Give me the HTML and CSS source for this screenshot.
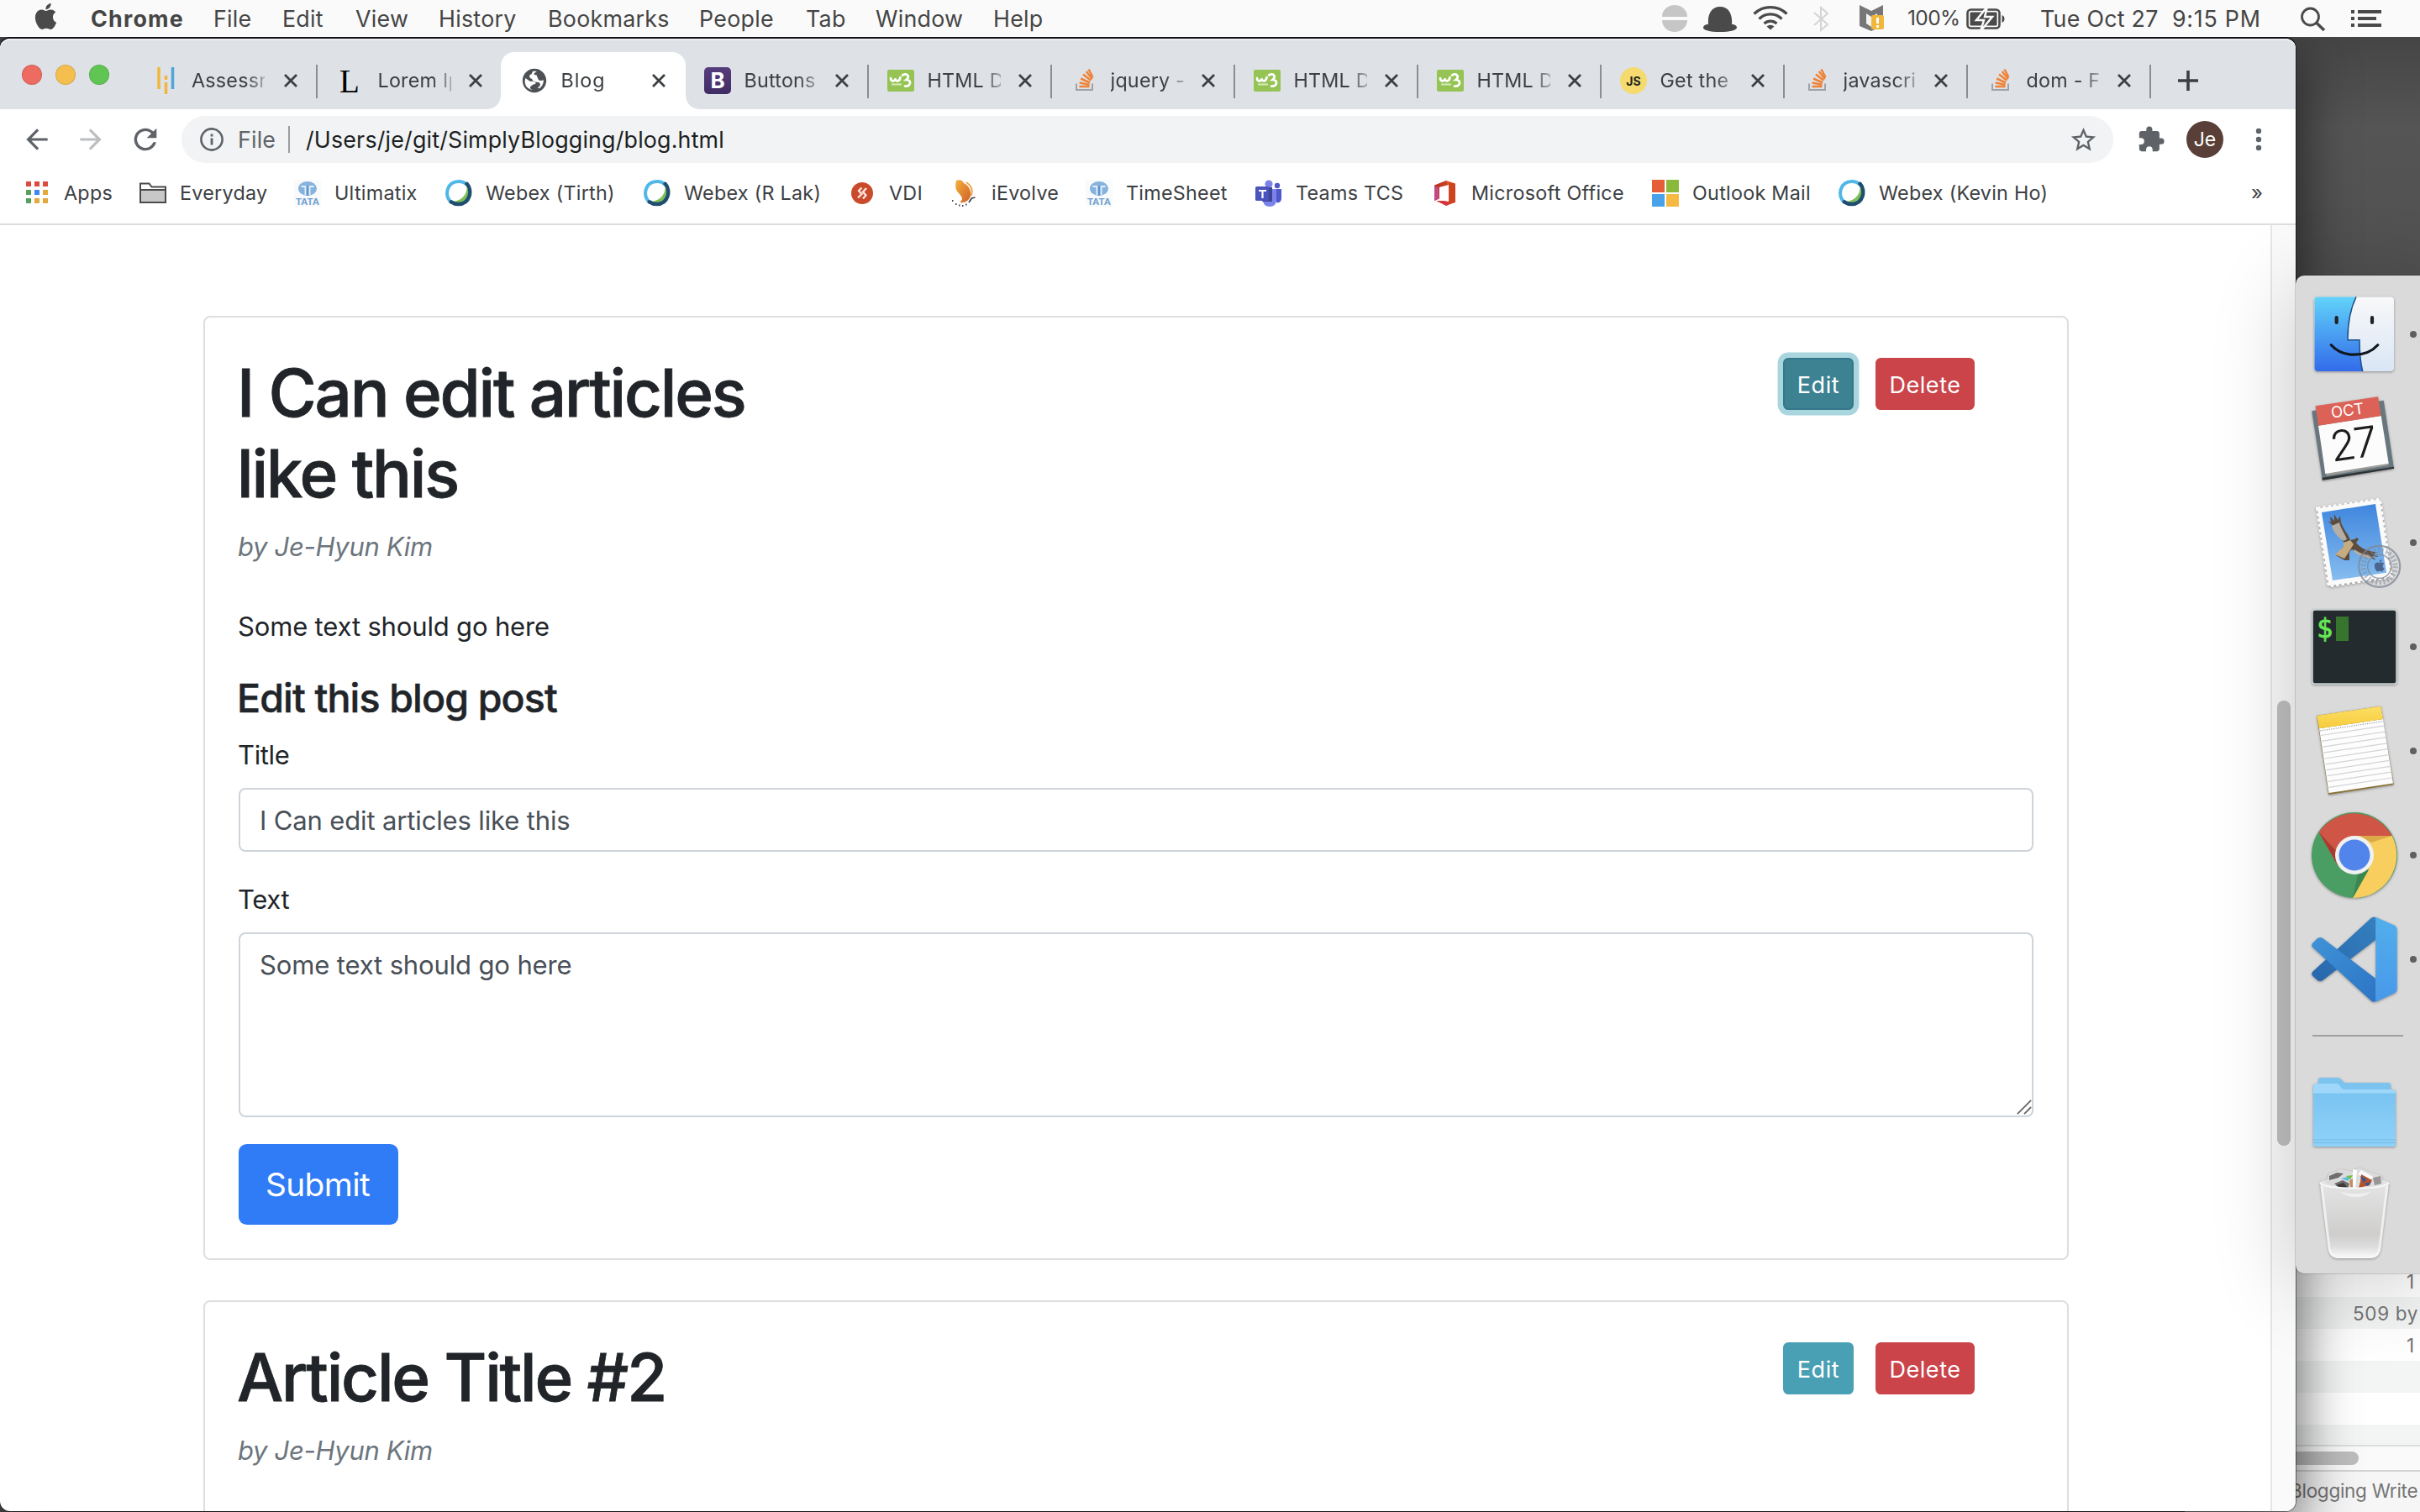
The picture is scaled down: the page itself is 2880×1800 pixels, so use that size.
FILE: index.html
```html
<!DOCTYPE html>
<html lang="en">
<head>
<meta charset="utf-8">
<title>Blog</title>
<link rel="stylesheet" href="styles.css">
</head>
<body>
<svg class="defs" aria-hidden="true">
  <defs>
    <linearGradient id="purple" x1="0" y1="0" x2="0" y2="1"><stop offset="0" stop-color="#563d7c"/><stop offset="1" stop-color="#402c64"/></linearGradient>
    <linearGradient id="gold" x1="0" y1="0" x2="1" y2="1"><stop offset="0" stop-color="#f4b13c"/><stop offset="1" stop-color="#cf5f28"/></linearGradient>
    <linearGradient id="officeRed" x1="0" y1="0" x2="1" y2="1"><stop offset="0" stop-color="#b02a1c"/><stop offset="1" stop-color="#e0562b"/></linearGradient>
    <linearGradient id="finderBlue" x1="0" y1="0" x2="0" y2="1"><stop offset="0" stop-color="#62d3fa"/><stop offset="1" stop-color="#326bea"/></linearGradient>
    <linearGradient id="finderWhite" x1="0" y1="0" x2="0" y2="1"><stop offset="0" stop-color="#f8f8f9"/><stop offset="1" stop-color="#d9e6f5"/></linearGradient>
    <linearGradient id="sky" x1="0" y1="0" x2="0" y2="1"><stop offset="0" stop-color="#3f86dd"/><stop offset="1" stop-color="#86bdf0"/></linearGradient>
    <linearGradient id="noteTop" x1="0" y1="0" x2="0" y2="1"><stop offset="0" stop-color="#fddf63"/><stop offset="1" stop-color="#f6cb3c"/></linearGradient>
    <linearGradient id="codeSide" x1="0" y1="0" x2="0" y2="1"><stop offset="0" stop-color="#52aeec"/><stop offset="1" stop-color="#4899ea"/></linearGradient>
    <linearGradient id="codeDark" x1="1" y1="0" x2="0" y2="1"><stop offset="0" stop-color="#3480bf"/><stop offset="1" stop-color="#2866ab"/></linearGradient>
    <linearGradient id="codeMid" x1="0" y1="0" x2="1" y2="1"><stop offset="0" stop-color="#3f93d6"/><stop offset="1" stop-color="#2d74c6"/></linearGradient>
    <linearGradient id="folderFront" x1="0" y1="0" x2="0" y2="1"><stop offset="0" stop-color="#7ac4f2"/><stop offset="1" stop-color="#8fd2f9"/></linearGradient>
    <linearGradient id="bin" x1="0" y1="0" x2="0" y2="1"><stop offset="0" stop-color="#e6e6e6"/><stop offset=".7" stop-color="#cfcecd"/><stop offset=".85" stop-color="#dcdcdc"/><stop offset="1" stop-color="#fafafb"/></linearGradient>
    <symbol id="close" viewBox="0 0 18 18"><path d="M2 2l14 14M16 2L2 16" fill="none" stroke="#3c4043" stroke-width="2.8"/></symbol>
    <symbol id="w3" viewBox="0 0 32 32"><rect y="3" width="32" height="26" rx="2" fill="#96c454"/><path d="M4 13c0 4 4.500 5 5.500.5C10 18 15 17 15.500 12M18 9.500c6-3 9 2 4.500 5.500 7 0 5.500 8-1.500 7.500" fill="none" stroke="#fff" stroke-width="2.700" stroke-linecap="round"/><path d="M5 20.500h12" stroke="#d8ebbd" stroke-width="2"/></symbol>
    <symbol id="so" viewBox="0 0 32 32"><path d="M7 19.500v7.500h19v-7.500" fill="none" stroke="#9fa3a7" stroke-width="2"/><g stroke="#ef8236" stroke-width="2.500"><path d="M10.500 23h12M10.700 18.500l11.800 2.400M12.200 13.500l10.800 5M15 8.500l9.300 7.300M18.700 5l7.200 9"/><path d="M21.500 2.500l5 9.500"/></g></symbol>
    <symbol id="tata" viewBox="0 0 32 32"><rect width="32" height="32" fill="#f8fafb"/><ellipse cx="16" cy="10.500" rx="11" ry="8.500" fill="#86b2de"/><path d="M13.500 18V8h-5M18.500 18V8h5" fill="none" stroke="#e3effa" stroke-width="2"/><path d="M16 19V7" stroke="#6295cc" stroke-width="2.500"/><text x="16" y="30" text-anchor="middle" class="tata-word">TATA</text></symbol>
    <symbol id="webex" viewBox="0 0 32 32"><circle cx="16" cy="16" r="14" fill="#fff"/><path d="M25.500 6.500c1 9-4 18-16 19.500 8 5 18 0 18-10 0-3.500-1-7-2-9.500z" fill="#7fbf58"/><path d="M7 27C-2 18 2 2 16 2c4 0 7 1.300 9.500 3.700" fill="none" stroke="#50b7e8" stroke-width="4"/><path d="M26.200 5.800C33 13 30.500 30 16 30c-3.500 0-6-1-8.500-2.700" transform="translate(-.6 -1)" fill="none" stroke="#1f4e70" stroke-width="4.500" stroke-linecap="round"/></symbol>
  </defs>
</svg>

<header class="menubar">
  <svg class="apple" viewBox="0 0 24 24"><path d="M12.152 6.896c-.948 0-2.415-1.078-3.960-1.040-2.040.027-3.910 1.183-4.961 3.014-2.117 3.675-.546 9.103 1.519 12.090 1.013 1.454 2.208 3.090 3.792 3.039 1.520-.065 2.090-.987 3.935-.987 1.831 0 2.350.987 3.960.948 1.637-.026 2.676-1.480 3.676-2.948 1.156-1.688 1.636-3.325 1.662-3.415-.039-.013-3.182-1.221-3.220-4.857-.026-3.040 2.480-4.494 2.597-4.559-1.429-2.090-3.623-2.324-4.390-2.376-2-.156-3.675 1.090-4.610 1.090zM15.530 3.830c.843-1.012 1.400-2.427 1.245-3.830-1.207.052-2.662.805-3.532 1.818-.780.896-1.454 2.338-1.273 3.714 1.338.104 2.715-.688 3.559-1.701" fill="#4a4a4a"/></svg>
  <nav class="menus">
    <span class="app-name">Chrome</span><span>File</span><span>Edit</span><span>View</span><span>History</span><span>Bookmarks</span><span>People</span><span>Tab</span><span>Window</span><span>Help</span>
  </nav>
  <div class="status">
    <svg width="30" height="44"><path d="M0 20a15 14 0 0 1 30 0zM0 24a15 14 0 0 0 30 0z" fill="#c6c6c6"/></svg>
    <svg width="42" height="44"><path d="M7 29C6 18 10 8 21 8s15 10 14 21c4 0 6 2 6 4 0 3-9 5-20 5S1 36 1 33c0-2 2-4 6-4z" fill="#4a4a4a"/></svg>
    <svg width="42" height="44"><g fill="none" stroke="#4a4a4a" stroke-width="3.200"><path d="M1.500 16.500a28 28 0 0 1 39 0M7.500 22.500a19 19 0 0 1 27 0M13.500 28a11 11 0 0 1 15 0"/></g><path d="M16.500 31.500a7 7 0 0 1 9 0L21 35.500z" fill="#4a4a4a"/></svg>
    <svg width="20" height="44"><path d="M1 15l16 14-8 7V9l8 7L1 30" fill="none" stroke="#d4d4d4" stroke-width="2"/></svg>
    <svg width="32" height="44"><path d="M1 6l14 7 14-7v25l-14 6-14-6z" fill="#777"/><path d="M9 16l6 4 7-4v12l-7 4-6-4z" fill="#f4f4f4"/><rect x="15" y="18" width="15" height="17" rx="2" fill="#f0b73c"/><path d="M22.500 21v7M22.500 30v3" stroke="#fff" stroke-width="3"/></svg>
    <span class="percent">100%</span>
    <svg width="48" height="44"><rect x="1.500" y="11.500" width="38" height="22" rx="4" fill="none" stroke="#4a4a4a" stroke-width="2.600"/><path d="M42.500 18c4 1 4 8 0 9z" fill="#4a4a4a"/><rect x="4.500" y="14.500" width="32" height="16" rx="1" fill="#4a4a4a"/><path d="M25 8L12 24h9l-4 13 14-17h-9z" fill="#4a4a4a" stroke="#fafafa" stroke-width="2.500"/></svg>
    <span>Tue Oct 27</span><span class="clock">9:15 PM</span>
    <svg width="30" height="44"><circle cx="11.500" cy="20" r="10" fill="none" stroke="#4a4a4a" stroke-width="2.800"/><path d="M18.500 27l9.500 9" stroke="#4a4a4a" stroke-width="3.600"/></svg>
    <svg width="38" height="44"><path d="M0 14h4M0 22h4M0 30h4M8 14h28M8 22h22M8 30h28" stroke="#4a4a4a" stroke-width="4"/></svg>
  </div>
</header>

<div class="desktop">
  <section class="finder">
    <div class="row">1</div><div class="row">509 by</div><div class="row">1</div><div class="row"></div><div class="row"></div><div class="row last"></div>
    <div class="hscroll"><span></span></div>
    <div class="pathbar">Blogging Write</div>
  </section>

  <section class="browser">
    <div class="tabstrip">
      <div class="lights"><i class="red"></i><i class="amber"></i><i class="green"></i></div>
      <div class="tab first"><svg class="fav" viewBox="0 0 32 32"><path d="M7 0v26M15.500 10v5M15.500 18v14" stroke="#f2b63f" stroke-width="3.500"/><path d="M23.500 0v26" stroke="#4fa5dc" stroke-width="3.500"/></svg><span class="label">Assessm</span><svg class="x"><use href="#close"/></svg></div>
      <div class="tab before-active"><svg class="fav" viewBox="0 0 32 32"><text x="2" y="30" class="serif-l">L</text></svg><span class="label">Lorem Ip</span><svg class="x"><use href="#close"/></svg></div>
      <div class="tab active"><svg class="fav globe" viewBox="0 0 24 24"><path fill="#4d5156" d="M12 2C6.480 2 2 6.480 2 12s4.480 10 10 10 10-4.480 10-10S17.520 2 12 2zM4 12.500c0-.9.200-1.800.500-2.600L8.200 12.600h3.300c1.200 0 1.500 1 1.500 2l-2.200.8c-1 .4-1 1.300-2.300 1.500v1.800l2 .9C6.500 19.300 4 16.300 4 12.500zM10.500 4.200c1.300-.3 2.600-.2 3.500.1l-2 1.400c-.7.5-.3 1.500.5 1.500h1.200l1.300 3.200c.8 1.800 2.500 2 4.700 1.100.1 3-1.300 5.600-3.700 7.100l-1.200-.3c.8-1.500 2.200-1.600 2-3.300-.1-1.300-1.300-1.800-2.500-1.800h-2c-.8 0-1.300-.8-1.700-1.500-.5-1-1.300-1.600-2.400-2l-.4-2.200 2-1.300z"/></svg><span class="label">Blog</span><svg class="x"><use href="#close"/></svg></div>
      <div class="tab"><svg class="fav" viewBox="0 0 32 32"><rect width="32" height="32" rx="5" fill="url(#purple)"/><text x="16" y="25" text-anchor="middle" class="bold-b">B</text></svg><span class="label">Buttons</span><svg class="x"><use href="#close"/></svg></div>
      <div class="tab"><svg class="fav"><use href="#w3"/></svg><span class="label">HTML D</span><svg class="x"><use href="#close"/></svg></div>
      <div class="tab"><svg class="fav"><use href="#so"/></svg><span class="label">jquery -</span><svg class="x"><use href="#close"/></svg></div>
      <div class="tab"><svg class="fav"><use href="#w3"/></svg><span class="label">HTML D</span><svg class="x"><use href="#close"/></svg></div>
      <div class="tab"><svg class="fav"><use href="#w3"/></svg><span class="label">HTML D</span><svg class="x"><use href="#close"/></svg></div>
      <div class="tab"><svg class="fav" viewBox="0 0 32 32"><circle cx="16" cy="16" r="16" fill="#f5da6d"/><text x="16" y="21.500" text-anchor="middle" class="js">JS</text></svg><span class="label">Get the</span><svg class="x"><use href="#close"/></svg></div>
      <div class="tab"><svg class="fav"><use href="#so"/></svg><span class="label">javascrip</span><svg class="x"><use href="#close"/></svg></div>
      <div class="tab"><svg class="fav"><use href="#so"/></svg><span class="label">dom - Fi</span><svg class="x"><use href="#close"/></svg></div>
      <svg class="newtab" viewBox="0 0 24 24"><path d="M12 0v24M0 12h24" stroke="#3c4043" stroke-width="3.600"/></svg>
    </div>

    <div class="toolbar">
      <svg class="nav" viewBox="0 0 24 24"><path fill="#5f6368" d="M20 11H7.830l5.590-5.590L12 4l-8 8 8 8 1.410-1.410L7.830 13H20z"/></svg>
      <svg class="nav" viewBox="0 0 24 24"><path fill="#bcbec1" d="M4 13h12.170l-5.590 5.590L12 20l8-8-8-8-1.410 1.410L16.170 11H4z"/></svg>
      <svg class="nav reload" viewBox="0 0 24 24"><path fill="#5f6368" d="M17.650 6.350A7.960 7.960 0 0 0 12 4a8 8 0 1 0 7.730 10h-2.080A6 6 0 1 1 12 6c1.660 0 3.140.690 4.220 1.780L13 11h7V4z"/></svg>
      <div class="omnibox">
        <svg class="info" viewBox="0 0 28 28"><circle cx="14" cy="14" r="12.600" fill="none" stroke="#5f6368" stroke-width="2.600"/><path d="M14 12.500v8M14 7.500v3" stroke="#5f6368" stroke-width="2.800"/></svg>
        <span class="scheme">File</span><i class="bar"></i><span class="url">/Users/je/git/SimplyBlogging/blog.html</span>
        <svg class="star" viewBox="0 0 24 24"><path fill="#5f6368" d="M22 9.240l-7.190-.620L12 2 9.190 8.630 2 9.240l5.460 4.730L5.820 21 12 17.270 18.180 21l-1.630-7.030L22 9.240zM12 15.400l-3.760 2.270 1-4.280-3.320-2.880 4.380-.380L12 6.100l1.710 4.040 4.380.380-3.320 2.880 1 4.280z"/></svg>
      </div>
      <svg class="puzzle" viewBox="0 0 24 24"><path fill="#5f6368" d="M20.500 11H19V7c0-1.100-.9-2-2-2h-4V3.500a2.500 2.500 0 0 0-5 0V5H4c-1.100 0-2 .9-2 2v3.800h1.500a2.700 2.700 0 0 1 0 5.400H2V20c0 1.100.9 2 2 2h3.800v-1.500a2.700 2.700 0 0 1 5.400 0V22H17c1.100 0 2-.9 2-2v-4h1.500a2.500 2.500 0 0 0 0-5z"/></svg>
      <span class="avatar">Je</span>
      <svg class="kebab" viewBox="0 0 8 28"><g fill="#5f6368"><circle cx="4" cy="4" r="3.200"/><circle cx="4" cy="14" r="3.200"/><circle cx="4" cy="24" r="3.200"/></g></svg>
    </div>

    <div class="bookmarks">
      <div><svg viewBox="0 0 32 32"><g><path d="M3 2h6v6H3zM13 2h6v6h-6zM23 2h6v6h-6z" fill="#dd4b3e"/><path d="M3 12h6v6H3zM3 22h6v6H3z" fill="#55a05a"/><path d="M13 12h6v6h-6z" fill="#4285f4"/><path d="M23 12h6v6h-6zM13 22h6v6h-6zM23 22h6v6h-6z" fill="#e3a93b"/></g></svg>Apps</div>
      <div><svg viewBox="0 0 32 32"><path d="M1 27V4.500h10.500l3 4H31V27z" fill="#fff" stroke="#4a4a4a" stroke-width="2"/><path d="M2 13h28v13H2z" fill="#c8c8c8"/><path d="M1 12h30" stroke="#4a4a4a" stroke-width="2"/></svg>Everyday</div>
      <div><svg><use href="#tata"/></svg>Ultimatix</div>
      <div><svg><use href="#webex"/></svg>Webex (Tirth)</div>
      <div><svg><use href="#webex"/></svg>Webex (R Lak)</div>
      <div><svg viewBox="0 0 32 32"><circle cx="16" cy="16" r="13" fill="#c94b2b"/><path d="M15.500 9.500L12 13l3.500 4-4.500 4.500M21 10l-4 4.500 3.500 4L17 22.500" fill="none" stroke="#fbe6df" stroke-width="2.400"/></svg>VDI</div>
      <div><svg viewBox="0 0 32 32"><path d="M6 1c4-2 8 0 9 3 6 3 9 9 8 15-1 5-6 9-13 8 4-3 4-6-1-11C4 11 5 5 6 1z" fill="url(#gold)"/><path d="M18 3c6 4 8 10 6 16" fill="none" stroke="#eda64b" stroke-width="2"/><path d="M1 25h1.500M5 29h1.500M9 30.500h1.500M13 31h1.500M17 29.500h1.500M21 27l3.500-5 4-1" fill="none" stroke="#444" stroke-width="1.800"/></svg>iEvolve</div>
      <div><svg><use href="#tata"/></svg>TimeSheet</div>
      <div><svg viewBox="0 0 32 32"><circle cx="16" cy="5" r="4.600" fill="#7b83eb"/><circle cx="26" cy="7" r="3.200" fill="#5059c9"/><path d="M21 11h10v11c0 4-3 6-6 5z" fill="#5059c9"/><path d="M9 11h16v13c0 5-3 8-8 8s-8-3-8-8z" fill="#7b83eb"/><path d="M14 9h6v17H8z" fill="#3d4596"/><rect y="8" width="16" height="17" rx="1.500" fill="#4b53bc"/><path d="M4 13h9M8.500 13v9" stroke="#fff" stroke-width="2.200"/></svg>Teams TCS</div>
      <div><svg viewBox="0 0 32 32"><path d="M18 1l11 3.500v22L18 31z" fill="#e0562b"/><path d="M18 1L4 6.500V25l6-2.500V9l10-2.500z" fill="url(#officeRed)"/><path d="M4 7v18l5-2.500V9.500z" fill="#c04a8c"/><path d="M6 25l12 6 4-2v-4z" fill="#d6353f"/><path d="M11 9l10-3v20l-11-2z" fill="#fff"/><path d="M21 3l8 2v22l-7 2z" fill="#cc4420"/></svg>Microsoft Office</div>
      <div><svg viewBox="0 0 32 32"><path d="M0 0h15v15H0z" fill="#e55e37"/><path d="M17 0h15v15H17z" fill="#8bb93b"/><path d="M0 17h15v15H0z" fill="#48a3ea"/><path d="M17 17h15v15H17z" fill="#f6ba42"/></svg>Outlook Mail</div>
      <div><svg><use href="#webex"/></svg>Webex (Kevin Ho)</div>
      <div class="more">»</div>
    </div>

    <div class="viewport">
      <main>
        <article class="card">
          <div class="head">
            <div class="titles"><h1>I Can edit articles<br>like this</h1><p class="author">by Je-Hyun Kim</p></div>
            <div class="actions"><button class="btn edit focused">Edit</button><button class="btn delete">Delete</button></div>
          </div>
          <p class="text">Some text should go here</p>
          <form>
            <h4>Edit this blog post</h4>
            <label>Title</label>
            <div class="control">I Can edit articles like this</div>
            <label>Text</label>
            <div class="control area">Some text should go here<svg class="grip" viewBox="0 0 20 20"><path d="M1 19L19 1M10 19l9-9" stroke="#666" stroke-width="2"/></svg></div>
            <button class="submit" type="button">Submit</button>
          </form>
        </article>
        <article class="card clipped">
          <div class="head">
            <div class="titles"><h1>Article Title #2</h1><p class="author">by Je-Hyun Kim</p></div>
            <div class="actions"><button class="btn edit">Edit</button><button class="btn delete">Delete</button></div>
          </div>
        </article>
      </main>
      <div class="vscroll"><span></span></div>
    </div>
  </section>

  <aside class="dock">
    <svg viewBox="0 0 148 124"><g class="lift"><rect x="22.500" y="17.500" width="94.500" height="88.500" rx="4" fill="url(#finderWhite)"/><path d="M72 17.500C64 34 62 52 62 68.700h14C76 82 77 95 79.700 106H26.500a4 4 0 0 1-4-4V21.500a4 4 0 0 1 4-4z" fill="url(#finderBlue)"/></g><path d="M72 17.500C64 34 62 52 62 68.700h14C76 82 77 95 79.700 106" fill="none" stroke="#1c4f86" stroke-width="1.500"/><path d="M48.700 42v6M91 42v6" stroke="#1d2227" stroke-width="4.200" stroke-linecap="round"/><path d="M42.300 74.700C56 90 84 90 97.700 74.700" fill="none" stroke="#12181f" stroke-width="3.200" stroke-linecap="round"/><circle cx="140" cy="62" r="4" fill="#5f5f5f"/></svg>
    <svg viewBox="0 0 148 124"><g class="lift"><path d="M19.300 29.300l85.400-12.600L117 97.700l-85 14z" fill="#68767d"/><path d="M32 111.700l85-14v-2l-85.500 13z" fill="#2e3335"/><path d="M35.300 102l75.400-12v4L37 106.500z" fill="#9a9c98"/><path d="M27 46.700L101.700 35l9 56.700L35.300 104z" fill="#fcfcfc"/><path d="M23.700 23.300l74.300-11 3.700 22.700L27 46.700z" fill="#dc6157"/></g><text class="cal-month" transform="translate(62.500 35) rotate(-8)" text-anchor="middle">OCT</text><text class="cal-day" transform="translate(70.500 86) rotate(-8)" text-anchor="middle">27</text></svg>
    <svg viewBox="0 0 148 124"><g class="lift"><path d="M26 21.500l74-11 13.500 92-74 11z" fill="#fafafa" stroke="#fafafa" stroke-width="4" stroke-dasharray="3.600 2.800"/></g><path d="M31 26l64-10 13 81.700L44 107z" fill="url(#sky)"/><path d="M38 36l4 2-1-7 5 5 0-8 4 7 3-5 1 8c3 9 9 14 11 21l5-1 3-2 2 2-3 4c6 7 12 9 17 10l9 2-6 1 7 4-8-1 5 5-9-4c-7 0-14-5-20-9l-3 3 0 10-6 0-5-3-5-3 7-8 5-5c-5-5-11-12-12-19z" fill="#5d4d3e"/><path d="M43 42l9-4c2 8 7 14 9 20l-4 2c-6-4-12-10-14-18zM70 70c8 6 14 6 19 8l2 3c-8 0-16-4-22-8z" fill="#b5aea4"/><path d="M57 62l8-3 4 5-5 8-6 9-11-5 10-9z" fill="#c7ab80"/><g fill="none" stroke="#7f8794" opacity=".75"><circle cx="99.700" cy="90.300" r="24.500" stroke-width="2.200"/><circle cx="99.700" cy="90.300" r="14" stroke-width="1.600"/><circle cx="99.700" cy="90.300" r="19" stroke-width="6" stroke-dasharray="2 2.600" opacity=".7"/></g><path transform="translate(92.500 82) scale(.6)" fill="#4d668e" d="M12.152 6.896c-.948 0-2.415-1.078-3.960-1.040-2.040.027-3.910 1.183-4.961 3.014-2.117 3.675-.546 9.103 1.519 12.090 1.013 1.454 2.208 3.090 3.792 3.039 1.520-.065 2.090-.987 3.935-.987 1.831 0 2.350.987 3.960.948 1.637-.026 2.676-1.480 3.676-2.948 1.156-1.688 1.636-3.325 1.662-3.415-.039-.013-3.182-1.221-3.220-4.857-.026-3.040 2.480-4.494 2.597-4.559-1.429-2.090-3.623-2.324-4.390-2.376-2-.156-3.675 1.090-4.610 1.090zM15.530 3.830c.843-1.012 1.400-2.427 1.245-3.830-1.207.052-2.662.805-3.532 1.818-.780.896-1.454 2.338-1.273 3.714 1.338.104 2.715-.688 3.559-1.701"/><circle cx="140" cy="62" r="4" fill="#5f5f5f"/></svg>
    <svg viewBox="0 0 148 124"><g class="lift"><rect x="20" y="18" width="100" height="88" rx="3" fill="#232b2e" stroke="#c9d6d6" stroke-width="1.500"/></g><text x="25" y="51" class="prompt">$</text><rect x="48" y="26" width="15" height="29" fill="#37752f"/><circle cx="140" cy="62" r="4" fill="#5f5f5f"/></svg>
    <svg viewBox="0 0 148 124"><g class="lift"><path d="M25.300 20l76-11.300 15.400 93.300-77.400 12z" fill="#8a7436"/><path d="M28 35.300l76-11.300 12 76.500-76.500 11.500z" fill="#fdfdfd"/><path d="M25.300 20l76-11.300L104 24 28 35.300z" fill="url(#noteTop)"/></g><path d="M29 38l75-11.300" stroke="#999" stroke-width="1.200" stroke-dasharray="1.200 1.500"/><g stroke="#d2d3d6" stroke-width="1.200"><path d="M30 43.500l75-11.300M31.100 50.400l75-11.300M32.200 57.200l75-11.300M33.300 64.100l75-11.300M34.400 71l75-11.300M35.500 77.900l75-11.300M36.600 84.700l75-11.300M37.700 91.600l75-11.300M38.800 98.400l75-11.300M39.900 105.300l75-11.300"/></g><circle cx="140" cy="62" r="4" fill="#5f5f5f"/></svg>
    <svg viewBox="0 0 148 124"><g class="lift"><circle cx="70" cy="62" r="51" fill="#4a9d63"/></g><path d="M70 39h44.700A51 51 0 0 1 68 113l21-39z" fill="#f8cf5e"/><path d="M27.700 34.700A51 51 0 0 1 114.700 39H70L50 74z" fill="#cf5546"/><path d="M27.700 34.700L50 74l-1-16z" fill="#a83a30"/><path d="M76 39h38.700L90 47z" fill="#dba948"/><path d="M87.300 79L68 113l6-28z" fill="#3b8750"/><circle cx="70" cy="62" r="23" fill="#f1f1f1"/><circle cx="70" cy="62" r="18.500" fill="#5285ec"/><circle cx="140" cy="62" r="4" fill="#5f5f5f"/></svg>
    <svg viewBox="0 0 148 124"><g class="lift"><path d="M90 12.800q3-2 5.300-.5v26.400L33 86.500q-4 3-7.500 0l-5-4.500q-2.500-3 0-5.500z" fill="url(#codeDark)"/><path d="M20.500 48q-2.500-3 0-5.500l5-5q3.500-3 7.500 0L95.300 85v27q-3 1.500-5.300-.5z" fill="url(#codeMid)"/><path d="M95.300 11.700l22 9.800q3.400 1.700 3.400 5.500v70q0 3.800-3.400 5.500l-22 10.200z" fill="url(#codeSide)"/></g><circle cx="140" cy="62" r="4" fill="#5f5f5f"/></svg>
    <hr>
    <svg viewBox="0 0 148 124"><g class="lift"><path d="M27 28v-4q0-3 3-3h20q3 0 4.500 2.500T59 27h51q3 0 3 3v8H27z" fill="#7cc3ef"/><path d="M21 100V31q0-3 3-3h25q2.500 0 4 3t5 4h58q3 0 3 3v62q0 3-3 3H24q-3 0-3-3z" fill="#9ed7f9"/><path d="M21 39.500h98V100q0 3-3 3H24q-3 0-3-3z" fill="url(#folderFront)"/><path d="M21 95h98M21 98.500h98" stroke="#73b9e4"/></g></svg>
    <svg viewBox="0 0 148 124"><g class="lift"><path d="M29 22c0-7 82-7 82 0l-10 78c-1 8-5 12-12 12H51c-7 0-11-4-12-12z" fill="url(#bin)"/><path d="M35 22l5-11 14-5 14 3 7-5 13 5 14 5 3 9c-16 8-52 8-70-1z" fill="#dcdcdc"/><path d="M40 14l9-4 8 1-6 5-11 3zM46 23l10-4 8 4-2 6h-9z" fill="#6f6d6d"/><path d="M48 25l9-3 4 5-6 2z" fill="#3f3a39"/><path d="M54 17l12-3-4 6z" fill="#5dbbe6"/><path d="M60 14l8-1-3 5z" fill="#74bf45"/><path d="M64 19l5-2 1 11-5-1z" fill="#c48c62"/><path d="M74 12l4-5 14 8-3 4z" fill="#fbfbfb"/><path d="M78 12l13 7-3 6-13 3 2-7z" fill="#b3532b"/><path d="M77 14l7 4-3 4zM82 23l7-2-3 5z" fill="#2e569f"/><path d="M92 16l9-2 1 9-8 2z" fill="#969696"/><path d="M68 6l5 1-2 22h-3z" fill="#fff"/></g><path d="M29 22c4 9 78 9 82 0" fill="none" stroke="#f7f7f7" stroke-width="2"/><path d="M31 26l9 74c1 7 5 10 11 10h38c6 0 10-3 11-10l9-74" fill="none" stroke="#f6f6f6" stroke-width="3" opacity=".8"/><path d="M52 32c10 9 28 10 38 0-9 4-28 4-38 0z" fill="#f1f1f1" opacity=".9"/></svg>
  </aside>
</div>
</body>
</html>
```
FILE: styles.css
```css
* { box-sizing: border-box; }
body {
  margin: 0;
  width: 2880px;
  height: 1800px;
  overflow: hidden;
  display: grid;
  grid-template-rows: 44px 1756px;
  font-family: Inter, "Liberation Sans", sans-serif;
  color: #212529;
}
h1, h4, p { margin: 0; }
svg { display: block; }
.defs { position: absolute; width: 0; height: 0; }

/* menu bar */
.menubar {
  display: flex;
  background: #fafafa;
  color: #454545;
  font-size: 26.8px;
  line-height: 44px;
  letter-spacing: .01em;
  white-space: nowrap;
  z-index: 2;
}
.apple { width: 31px; height: 31px; margin: 4px 0 0 39px; }
.menus {
  display: grid;
  grid-template-columns: 146px 82px 87px 99px 130px 180px 127px 83px 140px 100px;
  margin-left: 38px;
  flex: 1;
}
.app-name { font-weight: 700; letter-spacing: .045em; }
.status {
  display: grid;
  grid-template-columns: 48px 60px 72px 54px 58px 70px 88px 157px 153px 60px 82px;
}
.percent { font-size: 24.5px; letter-spacing: -.025em; line-height: 43px; }
.clock { letter-spacing: .028em; }

/* desktop */
.desktop {
  position: relative;
  overflow: hidden;
  background: linear-gradient(#454545, #555 110px, #505050 300px);
}

/* browser window */
.browser {
  position: absolute;
  left: 0;
  top: 2px;
  width: 2732px;
  height: 1753px;
  display: flex;
  flex-direction: column;
  background: #fff;
  border-radius: 12px;
  box-shadow: 0 -2px 0 #131419, 0 0 0 1px rgba(0, 0, 0, .45), 0 24px 70px rgba(0, 0, 0, .68);
}
.tabstrip {
  display: flex;
  height: 84px;
  padding-top: 16px;
  background: #dee1e6;
  border-radius: 12px 12px 0 0;
  box-shadow: inset 0 2px 0 #eceef1;
}
.lights { display: flex; gap: 16px; padding: 15px 0 0 26px; width: 158px; }
.lights i { width: 24px; height: 24px; border-radius: 50%; border: 1px solid rgba(0, 0, 0, .12); }
.red { background: #ed6b60; }
.amber { background: #f5bf4f; }
.green { background: #61c554; }
.tab {
  position: relative;
  display: flex;
  align-items: center;
  width: 218px;
  height: 68px;
  padding: 0 21px 0 24px;
}
.tab.first { width: 220px; padding-right: 23px; }
.tab::after {
  content: "";
  position: absolute;
  right: -2px;
  top: 15px;
  width: 2px;
  height: 40px;
  background: #8a8e93;
}
.tab.first::after { right: 0; }
.tab.active { background: #fff; border-radius: 16px 16px 0 0; width: 220px; margin-right: -2px; padding-right: 23px; z-index: 1; }
.tab.before-active::after { display: none; }
.tab.active::after, .tab.active::before {
  content: "";
  position: absolute;
  top: auto;
  bottom: 0;
  width: 16px;
  height: 16px;
  background: radial-gradient(circle at 0 0, transparent 15.500px, #fff 16px);
}
.tab.active::before { left: -16px; }
.tab.active::after { right: -16px; background: radial-gradient(circle at 100% 0, transparent 15.500px, #fff 16px); }
.fav { width: 32px; height: 32px; flex: none; }
.globe { width: 34px; height: 34px; margin: 0 -1px; }
.label {
  flex: 1;
  min-width: 0;
  margin-left: 15.500px;
  margin-right: 20.500px;
  white-space: nowrap;
  font-size: 23.300px;
  line-height: 34px;
  letter-spacing: .01em;
  color: #3c4043;
  -webkit-mask-image: linear-gradient(90deg, #000 64px, transparent 98px);
  mask-image: linear-gradient(90deg, #000 64px, transparent 98px);
}
.first .label { margin-left: 14px; margin-right: 22px; }
.active .label { letter-spacing: .04em; }
.x { width: 18px; height: 18px; flex: none; }
.newtab { width: 24px; height: 24px; margin: 22px 0 0 34px; }
.serif-l { font: 39px "Liberation Serif", serif; }
.bold-b { font: 700 26px Inter, sans-serif; fill: #fff; }
.js { font: 700 14px Inter, sans-serif; fill: #222; }

.toolbar { display: flex; align-items: center; height: 72px; padding-left: 25px; }
.nav { width: 38px; height: 38px; margin-right: 26px; }
.reload { width: 40px; height: 40px; margin-right: 24px; }
.omnibox {
  display: flex;
  align-items: center;
  width: 2299px;
  height: 56px;
  margin-left: -1px;
  padding: 0 18px 0 22px;
  background: #f1f3f4;
  border-radius: 28px;
  font-size: 26.800px;
  line-height: 56px;
  letter-spacing: .007em;
  color: #1d1f22;
}
.info { width: 28px; height: 28px; }
.scheme { margin-left: 17px; width: 60px; color: #5f6368; }
.bar { width: 2px; height: 32px; background: #9a9da1; }
.url { margin-left: 19px; flex: 1; }
.star { width: 35px; height: 35px; }
.puzzle { width: 34px; height: 34px; margin-left: 28px; }
.avatar {
  width: 44px;
  height: 44px;
  margin-left: 25px;
  border-radius: 50%;
  background: #593f37;
  color: #fff;
  font-size: 23px;
  line-height: 44px;
  text-align: center;
}
.kebab { width: 8px; height: 28px; margin-left: 38px; }

.bookmarks {
  display: grid;
  grid-template-columns: 138px 184px 180px 236px 244px 122px 160px 202px 209px 263px 222px 491px 30px;
  height: 66px;
  padding: 0 0 8px 28px;
  border-bottom: 2px solid #dcdde0;
  font-size: 23.300px;
  line-height: 56px;
  letter-spacing: .012em;
  color: #3c4043;
  white-space: nowrap;
}
.bookmarks div { display: flex; align-items: center; gap: 16px; }
.bookmarks svg { width: 32px; height: 32px; flex: none; }
.tata-word { font: 700 11.500px "Liberation Sans", sans-serif; fill: #6f9fd0; letter-spacing: 0; }
.more { font-size: 24px; }

/* blog page */
.viewport { display: flex; flex: 1; min-height: 0; overflow: hidden; border-radius: 0 0 12px 12px; }
main { flex: 1; padding: 108px 0 0 242px; overflow: hidden; }
.card {
  width: 2220px;
  margin-bottom: 48px;
  padding: 40px;
  border: 2px solid #dedede;
  border-radius: 8px;
}
.card.clipped { min-height: 420px; }
.head { display: flex; justify-content: space-between; }
.titles { padding-top: 2px; }
h1 {
  margin-left: -2px;
  font-size: 78px;
  font-weight: 500;
  line-height: 96px;
  letter-spacing: -.0285em;
  -webkit-text-stroke: .8px #212529;
}
.author {
  margin: 15px 0 0 -1px;
  font-size: 31px;
  font-style: italic;
  line-height: 48px;
  letter-spacing: -.0104em;
  color: #6c757d;
}
.actions { display: flex; align-items: flex-start; gap: 26px; padding: 8px 70px 0 0; }
.btn {
  height: 62px;
  padding: 2px 0 0;
  border: 2px solid;
  border-radius: 6.400px;
  font: 27px/57px Inter, sans-serif;
  letter-spacing: .02em;
  color: #fff;
}
.edit { width: 84px; background: #499fb4; border-color: #499fb4; }
.edit.focused { background: #3d8293; border-color: #357788; box-shadow: 0 0 0 6.400px #a9d5df; }
.delete { width: 118px; background: #ca444a; border-color: #ca444a; }
.text { margin: 47px 0 0 -1px; font-size: 31px; line-height: 48px; letter-spacing: -.0052em; }
h4 {
  margin: 32px 0 15px 0;
  font-size: 46.500px;
  font-weight: 500;
  line-height: 58px;
  letter-spacing: -.0183em;
  text-indent: -2px;
  -webkit-text-stroke: .5px #212529;
}
label { display: block; margin-left: -1px; font-size: 31px; line-height: 48px; letter-spacing: -.012em; }
.control {
  position: relative;
  height: 76px;
  margin: 15px 0 33px;
  padding: 13px 23px;
  border: 2px solid #ced4da;
  border-radius: 8px;
  font-size: 31px;
  line-height: 48px;
  letter-spacing: -.0045em;
  color: #495057;
}
.area { height: 220px; margin-bottom: 32px; }
.grip { position: absolute; right: 0; bottom: 1px; width: 18px; height: 18px; }
.submit {
  display: block;
  width: 190px;
  height: 96px;
  padding: 0 2px 0 0;
  border: 0;
  border-radius: 9.600px;
  background: #2f7cf6;
  color: #fff;
  font: 38.800px/96px Inter, sans-serif;
  letter-spacing: -.0153em;
}
.vscroll { width: 30px; padding: 566px 0 0 6px; border-left: 2px solid #e6e6e6; background: #fafafa; }
.vscroll span { display: block; width: 16px; height: 530px; border-radius: 8px; background: #bfbfbf; }

/* window behind */
.finder {
  position: absolute;
  left: 2600px;
  top: 1462px;
  width: 280px;
  height: 294px;
  background: #f6f6f6;
  color: #757575;
  font-size: 22.500px;
  letter-spacing: .03em;
  overflow: hidden;
}
.row { height: 38px; padding-left: 200px; line-height: 40px; background: #fff; white-space: nowrap; }
.row:nth-child(odd) { padding-left: 264px; }
.row:nth-child(even) { background: #f3f5f5; }
.row.last { height: 24px; }
.row:first-child { height: 38px; margin-top: 6px; }
.hscroll { height: 32px; padding-top: 6px; border-top: 2px solid #dcdcdc; border-bottom: 2px solid #d4d4d4; background: #fafafa; }
.hscroll span { display: block; width: 207px; height: 16px; border-radius: 8px; background: #bdbdbd; }
.pathbar { padding-left: 125px; line-height: 46px; white-space: nowrap; letter-spacing: -.012em; }
.finder { top: 1456px; height: 300px; }

/* dock */
.dock {
  position: absolute;
  left: 2732px;
  top: 284px;
  width: 160px;
  height: 1188px;
  padding-top: 8px;
  border-radius: 10px;
  background: #dadada;
  box-shadow: 0 0 0 1px rgba(0, 0, 0, .15), 0 14px 100px rgba(0, 0, 0, .2);
}
.dock svg { width: 148px; height: 124px; }
.dock hr { width: 108px; height: 2px; margin: 28px 0 28px 20px; border: 0; background: #a0a0a0; }
.lift { filter: drop-shadow(0 1px 1.500px rgba(0, 0, 0, .35)); }
.cal-month { font: 18.500px Inter, sans-serif; fill: #fff; }
.cal-day { font: 300 50px Inter, sans-serif; fill: #1d1d1d; letter-spacing: -2px; }
.prompt { font: 400 32px "DejaVu Sans Mono", monospace; fill: #65e853; stroke: #65e853; stroke-width: .8px; }
```
